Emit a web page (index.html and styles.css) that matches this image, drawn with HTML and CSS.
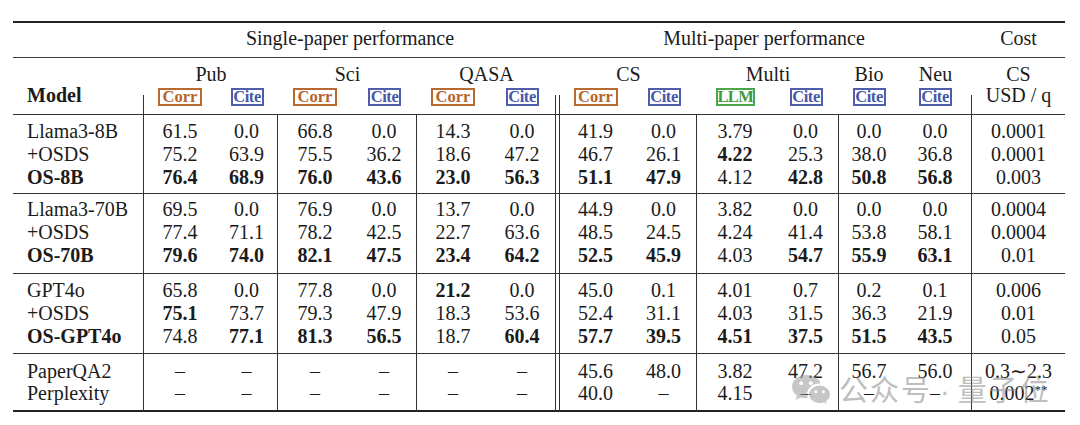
FILE: index.html
```html
<!DOCTYPE html>
<html lang="en">
<head>
<meta charset="utf-8">
<title>Results table</title>
<link rel="stylesheet" href="styles.css">
</head>
<body>
<div class="page">
<table class="results">
<colgroup>
<col class="c-model"><col class="c72"><col class="c62"><col class="c74"><col class="c65"><col class="c72"><col class="c67"><col class="c-gap"><col class="c71"><col class="c66"><col class="c76"><col class="c66"><col class="c60"><col class="c73"><col class="c93">
</colgroup>
<tr class="top">
<td></td>
<td colspan="6">Single-paper performance</td>
<td colspan="7">Multi-paper performance</td>
<td>Cost</td>
</tr>
<tr class="grp">
<td></td>
<td colspan="2">Pub</td>
<td colspan="2">Sci</td>
<td colspan="2">QASA</td>
<td></td>
<td colspan="2">CS</td>
<td colspan="2">Multi</td>
<td>Bio</td>
<td>Neu</td>
<td>CS</td>
</tr>
<tr class="sub">
<td class="model vr"><div class="lift"><b>Model</b></div></td>
<td><div class="lift"><span class="tag corr">Corr</span></div></td>
<td><div class="lift"><span class="tag cite">Cite</span></div></td>
<td><div class="lift"><span class="tag corr">Corr</span></div></td>
<td><div class="lift"><span class="tag cite">Cite</span></div></td>
<td><div class="lift"><span class="tag corr">Corr</span></div></td>
<td class="vr"><div class="lift"><span class="tag cite">Cite</span></div></td>
<td class="vr"></td>
<td><div class="lift"><span class="tag corr">Corr</span></div></td>
<td><div class="lift"><span class="tag cite">Cite</span></div></td>
<td><div class="lift"><span class="tag llm">LLM</span></div></td>
<td><div class="lift"><span class="tag cite">Cite</span></div></td>
<td><div class="lift"><span class="tag cite">Cite</span></div></td>
<td class="vr"><div class="lift"><span class="tag cite">Cite</span></div></td>
<td><div class="lift">USD / q</div></td>
</tr>

<tr class="row first g1">
<td class="model vr">Llama3-8B</td><td>61.5</td><td class="vr">0.0</td><td>66.8</td><td class="vr">0.0</td><td>14.3</td><td class="vr">0.0</td><td class="vr"></td><td>41.9</td><td class="vr">0.0</td><td>3.79</td><td class="vr">0.0</td><td>0.0</td><td class="vr">0.0</td><td>0.0001</td>
</tr>
<tr class="row">
<td class="model vr">+OSDS</td><td>75.2</td><td class="vr">63.9</td><td>75.5</td><td class="vr">36.2</td><td>18.6</td><td class="vr">47.2</td><td class="vr"></td><td>46.7</td><td class="vr">26.1</td><td class="b">4.22</td><td class="vr">25.3</td><td>38.0</td><td class="vr">36.8</td><td>0.0001</td>
</tr>
<tr class="row last g1">
<td class="model vr b">OS-8B</td><td class="b">76.4</td><td class="vr b">68.9</td><td class="b">76.0</td><td class="vr b">43.6</td><td class="b">23.0</td><td class="vr b">56.3</td><td class="vr"></td><td class="b">51.1</td><td class="vr b">47.9</td><td>4.12</td><td class="vr b">42.8</td><td class="b">50.8</td><td class="vr b">56.8</td><td>0.003</td>
</tr>

<tr class="row first g2">
<td class="model vr">Llama3-70B</td><td>69.5</td><td class="vr">0.0</td><td>76.9</td><td class="vr">0.0</td><td>13.7</td><td class="vr">0.0</td><td class="vr"></td><td>44.9</td><td class="vr">0.0</td><td>3.82</td><td class="vr">0.0</td><td>0.0</td><td class="vr">0.0</td><td>0.0004</td>
</tr>
<tr class="row">
<td class="model vr">+OSDS</td><td>77.4</td><td class="vr">71.1</td><td>78.2</td><td class="vr">42.5</td><td>22.7</td><td class="vr">63.6</td><td class="vr"></td><td>48.5</td><td class="vr">24.5</td><td>4.24</td><td class="vr">41.4</td><td>53.8</td><td class="vr">58.1</td><td>0.0004</td>
</tr>
<tr class="row last g2">
<td class="model vr b">OS-70B</td><td class="b">79.6</td><td class="vr b">74.0</td><td class="b">82.1</td><td class="vr b">47.5</td><td class="b">23.4</td><td class="vr b">64.2</td><td class="vr"></td><td class="b">52.5</td><td class="vr b">45.9</td><td>4.03</td><td class="vr b">54.7</td><td class="b">55.9</td><td class="vr b">63.1</td><td>0.01</td>
</tr>

<tr class="row first g3">
<td class="model vr">GPT4o</td><td>65.8</td><td class="vr">0.0</td><td>77.8</td><td class="vr">0.0</td><td class="b">21.2</td><td class="vr">0.0</td><td class="vr"></td><td>45.0</td><td class="vr">0.1</td><td>4.01</td><td class="vr">0.7</td><td>0.2</td><td class="vr">0.1</td><td>0.006</td>
</tr>
<tr class="row">
<td class="model vr">+OSDS</td><td class="b">75.1</td><td class="vr">73.7</td><td>79.3</td><td class="vr">47.9</td><td>18.3</td><td class="vr">53.6</td><td class="vr"></td><td>52.4</td><td class="vr">31.1</td><td>4.03</td><td class="vr">31.5</td><td>36.3</td><td class="vr">21.9</td><td>0.01</td>
</tr>
<tr class="row last g3">
<td class="model vr b">OS-GPT4o</td><td>74.8</td><td class="vr b">77.1</td><td class="b">81.3</td><td class="vr b">56.5</td><td>18.7</td><td class="vr b">60.4</td><td class="vr"></td><td class="b">57.7</td><td class="vr b">39.5</td><td class="b">4.51</td><td class="vr b">37.5</td><td class="b">51.5</td><td class="vr b">43.5</td><td>0.05</td>
</tr>

<tr class="row first g4 short">
<td class="model vr">PaperQA2</td><td>–</td><td class="vr">–</td><td>–</td><td class="vr">–</td><td>–</td><td class="vr">–</td><td class="vr"></td><td>45.6</td><td class="vr">48.0</td><td>3.82</td><td class="vr">47.2</td><td>56.7</td><td class="vr">56.0</td><td>0.3∼2.3</td>
</tr>
<tr class="row last g4 short bottom">
<td class="model vr">Perplexity</td><td>–</td><td class="vr">–</td><td>–</td><td class="vr">–</td><td>–</td><td class="vr">–</td><td class="vr"></td><td>40.0</td><td class="vr">–</td><td>4.15</td><td class="vr">–</td><td>–</td><td class="vr">–</td><td>0.002<sup class="star">**</sup></td>
</tr>
</table>

<div class="watermark">
<svg class="wechat" viewBox="0 0 40 34" width="40" height="34" aria-hidden="true">
<path d="M15 2 C7 2 1 7.3 1 13.8 C1 17.4 3 20.6 6 22.7 L4.8 27 L9.8 24.4 C11.4 24.9 13.2 25.2 15 25.2 C15.6 25.2 16.2 25.2 16.8 25.1 C16.3 23.9 16 22.6 16 21.3 C16 15.2 21.7 10.4 28.6 10.4 C29 10.4 29.3 10.4 29.6 10.4 C28.3 5.6 22.3 2 15 2 Z" fill="#9a9a9a"/>
<circle cx="10.2" cy="10.2" r="1.9" fill="#fff"/>
<circle cx="19.8" cy="10.2" r="1.9" fill="#fff"/>
<path d="M28.6 12 C22.5 12 17.6 16.2 17.6 21.3 C17.6 26.4 22.5 30.6 28.6 30.6 C30 30.6 31.4 30.4 32.6 30 L36.6 32.2 L35.6 28.6 C38 26.9 39.6 24.3 39.6 21.3 C39.6 16.2 34.7 12 28.6 12 Z" fill="#9a9a9a" stroke="#fff" stroke-width="1.2"/>
<circle cx="24.8" cy="18.8" r="1.5" fill="#fff"/>
<circle cx="32.4" cy="18.8" r="1.5" fill="#fff"/>
</svg>
<span class="wm-text">公众号<span class="wm-dot"> · </span>量子位</span>
</div>
</div>
</body>
</html>
```

FILE: styles.css
```css
html, body {
  margin: 0;
  padding: 0;
  background: #ffffff;
}

body {
  font-family: "Liberation Serif", "Times New Roman", serif;
  color: #1b1b1b;
}

.page {
  position: relative;
  width: 1080px;
  height: 425px;
  box-sizing: border-box;
  padding: 21px 0 0 13px;
  overflow: hidden;
}

.results {
  border-collapse: separate;
  border-spacing: 0;
  table-layout: fixed;
  width: 1052px;
  font-size: 20px;
}

.results td {
  padding: 0;
  text-align: center;
  white-space: nowrap;
  line-height: 23px;
  vertical-align: top;
}

.c-model { width: 131px; }
.c-gap { width: 4px; }
.c60 { width: 60px; }
.c62 { width: 62px; }
.c65 { width: 65px; }
.c66 { width: 66px; }
.c67 { width: 67px; }
.c71 { width: 71px; }
.c72 { width: 72px; }
.c73 { width: 73px; }
.c74 { width: 74px; }
.c76 { width: 76px; }
.c93 { width: 93px; }

.results td.model {
  text-align: left;
  padding-left: 14px;
}

.results td.vr {
  border-right: 1px solid #333333;
}

.results td.b,
.results b {
  font-weight: bold;
}

/* header rows */
.top td {
  border-top: 2px solid #222222;
  padding-top: 4px;
  padding-bottom: 7px;
}

.results .grp td {
  border-top: 1px solid #3a3a3a;
  padding-top: 6px;
  padding-bottom: 10px;
  line-height: 21px;
}

.results .sub td {
  padding-bottom: 8px;
  line-height: 21px;
}

.lift {
  margin-top: -10px;
  height: 21px;
}

.tag {
  display: inline-block;
  box-sizing: border-box;
  height: 18px;
  border: 2px solid;
  font-size: 16.5px;
  font-weight: bold;
  line-height: 14px;
  text-align: center;
  vertical-align: middle;
  white-space: nowrap;
}

.tag.corr {
  width: 44px;
  color: #b5652c;
  border-color: #b8692f;
}

.tag.cite {
  width: 33px;
  color: #4858a8;
  border-color: #4f5eab;
  letter-spacing: -0.4px;
}

.tag.llm {
  width: 39px;
  color: #3f9a3f;
  border-color: #4aa64a;
  letter-spacing: -0.7px;
}

/* body groups */
.results .first td {
  border-top: 1px solid #333333;
  padding-top: 5px;
}

.results .last td {
  padding-bottom: 5px;
}

.results .g1.last td { padding-bottom: 4px; }
.results .g2.first td { padding-top: 4px; }
.results .g2.last td { padding-bottom: 6px; }

.results .short td {
  line-height: 22px;
}

.results .g4.first td { padding-top: 6px; }
.results .g4.last td { padding-bottom: 6px; }

.results .bottom td {
  border-bottom: 2px solid #222222;
}

.star {
  font-size: 13px;
  line-height: 0;
  vertical-align: 6px;
}

/* watermark overlay */
.watermark {
  position: absolute;
  left: 791px;
  top: 371px;
  display: flex;
  align-items: center;
  gap: 8px;
  opacity: 0.55;
  pointer-events: none;
}

.wechat {
  display: block;
}

.wm-text {
  font-family: "Noto Sans CJK SC", "Noto Sans", sans-serif;
  font-size: 29px;
  line-height: 34px;
  color: #8a8a8a;
  letter-spacing: 2px;
}

.wm-dot {
  font-family: "Liberation Sans", sans-serif;
  letter-spacing: 0;
}
```
